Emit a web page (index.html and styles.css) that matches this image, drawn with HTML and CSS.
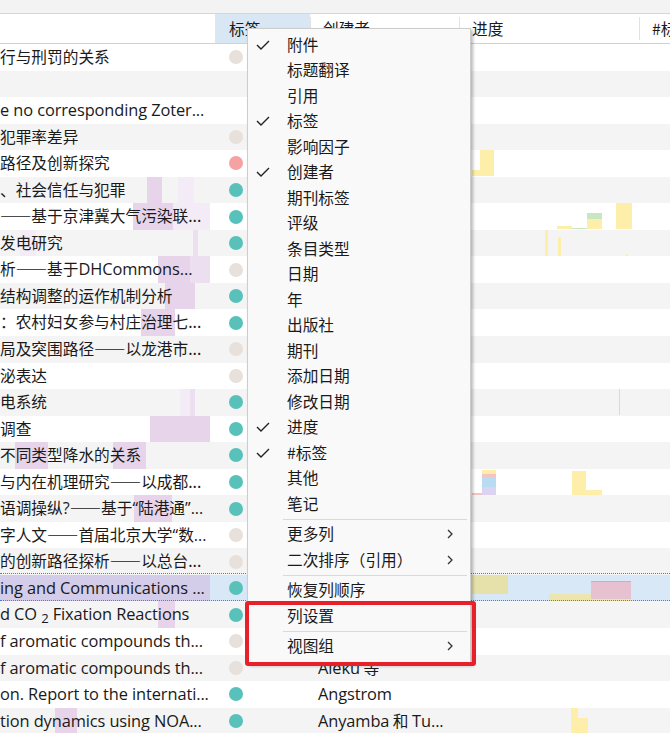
FILE: index.html
```html
<!DOCTYPE html>
<html lang="zh">
<head>
<meta charset="utf-8">
<title>Zotero columns</title>
<link rel="stylesheet" href="styles.css">
</head>
<body>
<div class="app">
  <div class="topbar"></div>
  <div class="header">
    <div class="hcol"></div>
    <div class="hcol active">标签</div>
    <div class="hcol sep">创建者</div>
    <div class="hcol sep">进度</div>
    <div class="hcol sep">#标签</div>
  </div>

  <div class="rows">
    <div class="row">
      <div class="c-title"><span class="t">行与刑罚的关系</span></div>
      <div class="c-tag"><span class="dot beige"></span></div>
      <div class="c-creator"></div><div class="c-prog"></div><div></div>
    </div>
    <div class="row">
      <div class="c-title"></div>
      <div class="c-tag"></div>
      <div class="c-creator"></div><div class="c-prog"></div><div></div>
    </div>
    <div class="row">
      <div class="c-title"><span class="t lat">e no corresponding Zoter...</span></div>
      <div class="c-tag"></div>
      <div class="c-creator"></div><div class="c-prog"></div><div></div>
    </div>
    <div class="row">
      <div class="c-title"><span class="t">犯罪率差异</span></div>
      <div class="c-tag"><span class="dot beige"></span></div>
      <div class="c-creator"></div><div class="c-prog"></div><div></div>
    </div>
    <div class="row">
      <div class="c-title"><span class="t">路径及创新探究</span></div>
      <div class="c-tag"><span class="dot pink"></span></div>
      <div class="c-creator"></div>
      <div class="c-prog">
        <i class="bar y" style="left:13px;width:8px;top:20px;height:6px"></i>
        <i class="bar y" style="left:21px;width:14px;top:0;height:26px"></i>
      </div><div></div>
    </div>
    <div class="row">
      <div class="c-title">
        <i class="heat h1" style="left:147px;width:15px"></i>
        <i class="heat h3" style="left:178px;width:16px"></i>
        <span class="t">、社会信任与犯罪</span></div>
      <div class="c-tag"><span class="dot teal"></span></div>
      <div class="c-creator"></div><div class="c-prog"></div><div></div>
    </div>
    <div class="row">
      <div class="c-title">
        <i class="heat h1" style="left:133px;width:40px"></i>
        <i class="heat h3" style="left:173px;width:37px"></i>
        <span class="t">——基于京津冀大气污染联...</span></div>
      <div class="c-tag"><span class="dot teal"></span></div>
      <div class="c-creator"></div>
      <div class="c-prog">
        <i class="bar y" style="left:98px;width:15px;top:23px;height:3px"></i>
        <i class="bar g" style="left:113px;width:15px;top:25px;height:1px"></i>
        <i class="bar g" style="left:128px;width:15px;top:10px;height:6px"></i>
        <i class="bar y" style="left:128px;width:15px;top:16px;height:10px"></i>
        <i class="bar y" style="left:157px;width:16px;top:0;height:26px"></i>
      </div><div></div>
    </div>
    <div class="row">
      <div class="c-title">
        <i class="heat h3" style="left:20px;width:16px"></i>
        <i class="heat h2" style="left:193px;width:5px"></i>
        <span class="t">发电研究</span></div>
      <div class="c-tag"><span class="dot teal"></span></div>
      <div class="c-creator"></div>
      <div class="c-prog">
        <i class="bar y" style="left:86px;width:3px;top:0;height:26px"></i>
        <i class="bar y" style="left:99px;width:3px;top:7px;height:19px"></i>
        <i class="bar y" style="left:167px;width:2px;top:24px;height:2px"></i>
      </div><div></div>
    </div>
    <div class="row">
      <div class="c-title">
        <i class="heat h1" style="left:158px;width:32px"></i>
        <i class="heat h2" style="left:190px;width:20px"></i>
        <span class="t">析——基于<span class="latw">DHCommons...</span></span></div>
      <div class="c-tag"><span class="dot beige"></span></div>
      <div class="c-creator"></div><div class="c-prog"></div><div></div>
    </div>
    <div class="row">
      <div class="c-title">
        <i class="heat h1" style="left:165px;width:30px"></i>
        <span class="t">结构调整的运作机制分析</span></div>
      <div class="c-tag"><span class="dot teal"></span></div>
      <div class="c-creator"></div><div class="c-prog"></div><div></div>
    </div>
    <div class="row">
      <div class="c-title">
        <i class="heat h1" style="left:141px;width:34px"></i>
        <span class="t">：农村妇女参与村庄治理七...</span></div>
      <div class="c-tag"><span class="dot teal"></span></div>
      <div class="c-creator"></div><div class="c-prog"></div><div></div>
    </div>
    <div class="row">
      <div class="c-title"><span class="t">局及突围路径——以龙港市...</span></div>
      <div class="c-tag"><span class="dot beige"></span></div>
      <div class="c-creator"></div><div class="c-prog"></div><div></div>
    </div>
    <div class="row">
      <div class="c-title"><span class="t">泌表达</span></div>
      <div class="c-tag"><span class="dot beige"></span></div>
      <div class="c-creator"></div><div class="c-prog"></div><div></div>
    </div>
    <div class="row">
      <div class="c-title">
        <i class="heat h3" style="left:180px;width:10px"></i>
        <i class="heat h2" style="left:190px;width:5px"></i>
        <span class="t">电系统</span></div>
      <div class="c-tag"><span class="dot teal"></span></div>
      <div class="c-creator"></div>
      <div class="c-prog">
        <i class="bar g" style="left:160px;width:1px;top:0;height:26px"></i>
      </div><div></div>
    </div>
    <div class="row">
      <div class="c-title">
        <i class="heat h1" style="left:150px;width:60px"></i>
        <span class="t">调查</span></div>
      <div class="c-tag"><span class="dot teal"></span></div>
      <div class="c-creator"></div><div class="c-prog"></div><div></div>
    </div>
    <div class="row">
      <div class="c-title">
        <i class="heat h1" style="left:15px;width:33px"></i>
        <i class="heat h1" style="left:113px;width:33px"></i>
        <span class="t">不同类型降水的关系</span></div>
      <div class="c-tag"><span class="dot teal"></span></div>
      <div class="c-creator"></div><div class="c-prog"></div><div></div>
    </div>
    <div class="row">
      <div class="c-title"><span class="t">与内在机理研究——以成都...</span></div>
      <div class="c-tag"><span class="dot teal"></span></div>
      <div class="c-creator"></div>
      <div class="c-prog">
        <i class="bar pk" style="left:13px;width:10px;top:24px;height:2px"></i>
        <i class="bar y" style="left:23px;width:14px;top:1px;height:4px"></i>
        <i class="bar pk" style="left:23px;width:14px;top:5px;height:3px"></i>
        <i class="bar bl" style="left:23px;width:14px;top:8px;height:10px"></i>
        <i class="bar lv" style="left:23px;width:14px;top:18px;height:8px"></i>
        <i class="bar y" style="left:113px;width:14px;top:2px;height:24px"></i>
        <i class="bar y" style="left:127px;width:16px;top:21px;height:5px"></i>
      </div><div></div>
    </div>
    <div class="row">
      <div class="c-title">
        <i class="heat h1" style="left:134px;width:38px"></i>
        <span class="t">语调操纵<span class="q">?</span>——基于<span class="q">“</span>陆港通<span class="q">”...</span></span></div>
      <div class="c-tag"><span class="dot teal"></span></div>
      <div class="c-creator"></div><div class="c-prog"></div><div></div>
    </div>
    <div class="row">
      <div class="c-title"><span class="t">字人文——首届北京大学<span class="q">“</span>数<span class="q">...</span></span></div>
      <div class="c-tag"><span class="dot beige"></span></div>
      <div class="c-creator"></div><div class="c-prog"></div><div></div>
    </div>
    <div class="row">
      <div class="c-title"><span class="t">的创新路径探析——以总台...</span></div>
      <div class="c-tag"><span class="dot beige"></span></div>
      <div class="c-creator"></div><div class="c-prog"></div><div></div>
    </div>
    <div class="row selected">
      <div class="c-title">
        <i class="heat lav" style="left:0;width:210px"></i>
        <span class="t lat">ing and Communications ...</span></div>
      <div class="c-tag"><span class="dot teal"></span></div>
      <div class="c-creator"></div>
      <div class="c-prog">
        <i class="bar ol" style="left:13px;width:36px;top:0;height:19px"></i>
        <i class="bar y2" style="left:90px;width:82px;top:19px;height:8px"></i>
        <i class="bar pk2" style="left:132px;width:40px;top:6px;height:18px"></i>
      </div><div></div>
    </div>
    <div class="row">
      <div class="c-title">
        <i class="heat h1" style="left:158px;width:17px"></i>
        <span class="t lat">d CO <sub>2</sub> Fixation Reactions</span></div>
      <div class="c-tag"><span class="dot teal"></span></div>
      <div class="c-creator"></div><div class="c-prog"></div><div></div>
    </div>
    <div class="row">
      <div class="c-title"><span class="t lat">f aromatic compounds th...</span></div>
      <div class="c-tag"><span class="dot beige"></span></div>
      <div class="c-creator"></div><div class="c-prog"></div><div></div>
    </div>
    <div class="row">
      <div class="c-title"><span class="t lat">f aromatic compounds th...</span></div>
      <div class="c-tag"><span class="dot beige"></span></div>
      <div class="c-creator"><span class="latw">Aleku</span> 等</div><div class="c-prog"></div><div></div>
    </div>
    <div class="row">
      <div class="c-title"><span class="t lat">on. Report to the internati...</span></div>
      <div class="c-tag"><span class="dot teal"></span></div>
      <div class="c-creator"><span class="latw">Angstrom</span></div><div class="c-prog"></div><div></div>
    </div>
    <div class="row">
      <div class="c-title">
        <i class="heat h1" style="left:55px;width:22px"></i>
        <span class="t lat">tion dynamics using NOA...</span></div>
      <div class="c-tag"><span class="dot teal"></span></div>
      <div class="c-creator"><span class="latw">Anyamba</span> 和 <span class="latw">Tu...</span></div>
      <div class="c-prog">
        <i class="bar y" style="left:112px;width:7px;top:0;height:26px"></i>
        <i class="bar y" style="left:119px;width:10px;top:10px;height:16px"></i>
      </div><div></div>
    </div>
  </div>

  <div class="menu">
    <div class="mi"><span class="chk"><svg width="14" height="10" viewBox="0 0 14 10"><polyline points="1,5 5,9 13,1" /></svg></span>附件</div>
    <div class="mi"><span class="chk"></span>标题翻译</div>
    <div class="mi"><span class="chk"></span>引用</div>
    <div class="mi"><span class="chk"><svg width="14" height="10" viewBox="0 0 14 10"><polyline points="1,5 5,9 13,1" /></svg></span>标签</div>
    <div class="mi"><span class="chk"></span>影响因子</div>
    <div class="mi"><span class="chk"><svg width="14" height="10" viewBox="0 0 14 10"><polyline points="1,5 5,9 13,1" /></svg></span>创建者</div>
    <div class="mi"><span class="chk"></span>期刊标签</div>
    <div class="mi"><span class="chk"></span>评级</div>
    <div class="mi"><span class="chk"></span>条目类型</div>
    <div class="mi"><span class="chk"></span>日期</div>
    <div class="mi"><span class="chk"></span>年</div>
    <div class="mi"><span class="chk"></span>出版社</div>
    <div class="mi"><span class="chk"></span>期刊</div>
    <div class="mi"><span class="chk"></span>添加日期</div>
    <div class="mi"><span class="chk"></span>修改日期</div>
    <div class="mi"><span class="chk"><svg width="14" height="10" viewBox="0 0 14 10"><polyline points="1,5 5,9 13,1" /></svg></span>进度</div>
    <div class="mi"><span class="chk"><svg width="14" height="10" viewBox="0 0 14 10"><polyline points="1,5 5,9 13,1" /></svg></span>#标签</div>
    <div class="mi"><span class="chk"></span>其他</div>
    <div class="mi"><span class="chk"></span>笔记</div>
    <div class="msep"></div>
    <div class="mi"><span class="chk"></span>更多列<svg class="arr" width="6" height="10" viewBox="0 0 6 10"><polyline points="1,1 5,5 1,9" /></svg></div>
    <div class="mi"><span class="chk"></span>二次排序（引用）<svg class="arr" width="6" height="10" viewBox="0 0 6 10"><polyline points="1,1 5,5 1,9" /></svg></div>
    <div class="msep"></div>
    <div class="mi"><span class="chk"></span>恢复列顺序</div>
    <div class="mi"><span class="chk"></span>列设置</div>
    <div class="msep"></div>
    <div class="mi"><span class="chk"></span>视图组<svg class="arr" width="6" height="10" viewBox="0 0 6 10"><polyline points="1,1 5,5 1,9" /></svg></div>
  </div>
  <div class="redbox"></div>
</div>
</body>
</html>
```

FILE: styles.css
```css
* { box-sizing: border-box; }
html, body { margin: 0; padding: 0; }
body {
  width: 670px;
  height: 733px;
  overflow: hidden;
  background: #fff;
  font-family: "Noto Sans CJK SC", "Noto Sans", sans-serif;
  font-size: 15.7px;
  color: #1a1a1a;
}
.app { position: relative; width: 670px; height: 733px; overflow: hidden; }

.topbar {
  height: 14px;
  background: #f3f3f3;
  border-bottom: 1px solid #d6d6d6;
}
.header {
  display: grid;
  grid-template-columns: 215px 95px 149px 180px 1fr;
  height: 30px;
  border-bottom: 1px solid #d2d2d2;
  background: #fff;
}
.hcol {
  display: flex;
  align-items: center;
  padding-left: 14px;
  line-height: 1;
  white-space: nowrap;
  overflow: hidden;
  position: relative;
}
.hcol.active { background: #d9e7f5; }
.hcol.sep { padding-left: 13px; }
.hcol.sep::before {
  content: "";
  position: absolute;
  left: 0; top: 3px; bottom: 3px;
  width: 1px;
  background: #e2e2e2;
}

.row {
  display: grid;
  grid-template-columns: 215px 95px 149px 180px 1fr;
  height: 26.56px;
  background: #fff;
  position: relative;
}
.row:nth-child(even) { background: #f4f4f4; }
.row.selected { background: #d8e8f7; }
.row.selected::before, .row.selected::after {
  content: "";
  position: absolute;
  left: 0; right: 0;
  height: 0;
  border-top: 1px dotted #3d82d6;
  z-index: 2;
}
.row.selected::before { top: -2px; }
.row.selected::after { bottom: 0; }

.c-title, .c-prog, .c-creator, .c-tag {
  position: relative;
  overflow: hidden;
  white-space: nowrap;
}
.c-title .t, .c-creator {
  position: relative;
  line-height: 26px;
}
.c-title .t.lat {
  font-family: "Open Sans", "Noto Sans CJK SC", sans-serif;
  font-size: 16.4px;
  letter-spacing: -0.1px;
}
.latw {
  font-family: "Open Sans", "Noto Sans CJK SC", sans-serif;
  font-size: 16.4px;
  letter-spacing: -0.1px;
}
.q { font-family: "Open Sans", sans-serif; font-size: 16px; }
.c-title .t sub { font-size: 0.8em; vertical-align: -3px; line-height: 0; }
.c-creator { padding-left: 8px; }
.c-tag { display: flex; align-items: center; padding-left: 14px; }

.dot { width: 14px; height: 14px; border-radius: 50%; display: block; }
.dot.beige { background: #e8e0da; }
.dot.pink { background: #f7a2a2; }
.dot.teal { background: #58c1ba; }

.heat { position: absolute; top: 0; bottom: 0; }
.heat.h1 { background: #e7d4ea; }
.heat.h2 { background: #ecdff0; }
.heat.h3 { background: #f3ebf5; }
.heat.lav { background: #d4cdea; }

.bar { position: absolute; }
.bar.y { background: #fdefa9; }
.bar.y2 { background: #ece5ad; }
.bar.ol { background: #e6e1ab; }
.bar.g { background: #c9e6c2; }
.bar.pk { background: #f6c3c3; }
.bar.pk2 { background: #e6c2d0; border-top: 1px solid #d9a7b8; }
.bar.bl { background: #b8dcf2; }
.bar.lv { background: #dcd3f3; }

.menu {
  position: absolute;
  left: 247px;
  top: 28px;
  width: 224px;
  padding: 3px 3px 4px 0;
  background: #f9f9f9;
  border: 1px solid #cdcdcd;
  box-shadow: 2px 2px 3px rgba(0,0,0,0.28);
  z-index: 5;
}
.mi {
  height: 25.5px;
  display: flex;
  align-items: center;
  line-height: 1;
  white-space: nowrap;
  color: #1a1a1a;
}
.chk {
  width: 39px;
  flex: none;
  display: flex;
  align-items: center;
  padding-left: 8px;
}
.chk svg polyline { fill: none; stroke: #222; stroke-width: 1.4; }
.arr { margin-left: auto; margin-right: 14px; }
.arr polyline { fill: none; stroke: #333; stroke-width: 1.3; }
.msep {
  height: 5px;
  margin-left: 35px;
  display: flex;
  align-items: center;
}
.msep::before {
  content: "";
  display: block;
  width: 100%;
  height: 1px;
  background: #d9d9d9;
}

.redbox {
  position: absolute;
  left: 245px;
  top: 601px;
  width: 231px;
  height: 65px;
  border: 4px solid #e8202a;
  border-radius: 3px;
  z-index: 6;
}
```
